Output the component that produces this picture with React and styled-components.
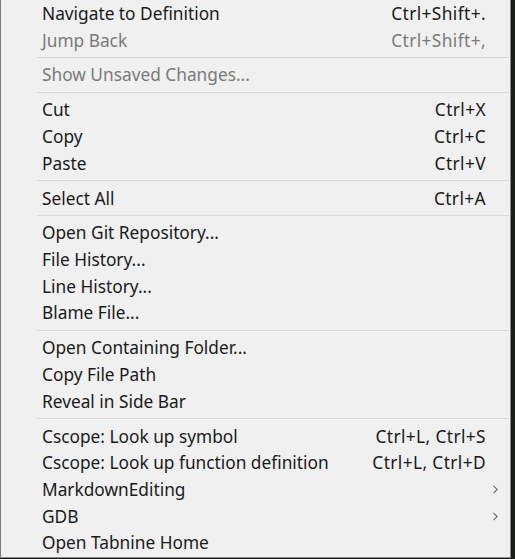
import React from 'react';
import styled, { createGlobalStyle } from 'styled-components';

const GlobalStyle = createGlobalStyle`
  html, body {
    margin: 0;
    padding: 0;
    background: #1a1c1a;
  }
`;

const Menu = styled.div`
  box-sizing: border-box;
  width: 511px;
  height: 558px;
  background: #f0f0f0;
  border-left: 1px solid #7a7a7a;
  border-right: 1px solid #8a8a8a;
  border-bottom: 1px solid #8a8a8a;
  display: flex;
  flex-direction: column;
  font-family: "Noto Sans", "Open Sans", sans-serif;
  font-size: 17.3px;
  color: #1a1a1a;
  overflow: hidden;
`;

const Item = styled.div`
  display: flex;
  align-items: center;
  height: 26.7px;
  flex-shrink: 0;
  padding: 0 11px 0 41px;
  color: ${(p) => (p.disabled ? '#7a7a7a' : '#1a1a1a')};
  white-space: nowrap;
`;

const Label = styled.span`
  flex: 1;
`;

const Shortcut = styled.span`
  text-align: right;
  letter-spacing: 0.4px;
`;

const Arrow = styled.span`
  width: 13px;
  display: flex;
  justify-content: flex-end;
  padding-right: 1px;
  box-sizing: border-box;
`;

const Separator = styled.div`
  height: 1px;
  flex-shrink: 0;
  background: #d9d9d9;
  margin: 3.6px 1px 3.6px 36px;
`;

const Chevron = () => (
  <svg width="5" height="9" viewBox="0 0 5 9">
    <path d="M0.5 0.8 L4.2 4.5 L0.5 8.2" fill="none" stroke="#6a6a6a" strokeWidth="1.1" />
  </svg>
);

const groups = [
  [
    { label: 'Navigate to Definition', keys: 'Ctrl+Shift+.' },
    { label: 'Jump Back', keys: 'Ctrl+Shift+,', disabled: true },
  ],
  [{ label: 'Show Unsaved Changes...', disabled: true }],
  [
    { label: 'Cut', keys: 'Ctrl+X' },
    { label: 'Copy', keys: 'Ctrl+C' },
    { label: 'Paste', keys: 'Ctrl+V' },
  ],
  [{ label: 'Select All', keys: 'Ctrl+A' }],
  [
    { label: 'Open Git Repository...' },
    { label: 'File History...' },
    { label: 'Line History...' },
    { label: 'Blame File...' },
  ],
  [
    { label: 'Open Containing Folder...' },
    { label: 'Copy File Path' },
    { label: 'Reveal in Side Bar' },
  ],
  [
    { label: 'Cscope: Look up symbol', keys: 'Ctrl+L, Ctrl+S' },
    { label: 'Cscope: Look up function definition', keys: 'Ctrl+L, Ctrl+D' },
    { label: 'MarkdownEditing', sub: true },
    { label: 'GDB', sub: true },
    { label: 'Open Tabnine Home' },
  ],
];

export default function App() {
  return (
    <>
      <GlobalStyle />
      <Menu>
        {groups.map((group, gi) => (
          <React.Fragment key={gi}>
            {gi > 0 && <Separator />}
            {group.map((it) => (
              <Item key={it.label} disabled={it.disabled}>
                <Label>{it.label}</Label>
                {it.keys && <Shortcut>{it.keys}</Shortcut>}
                <Arrow>{it.sub && <Chevron />}</Arrow>
              </Item>
            ))}
          </React.Fragment>
        ))}
      </Menu>
    </>
  );
}
